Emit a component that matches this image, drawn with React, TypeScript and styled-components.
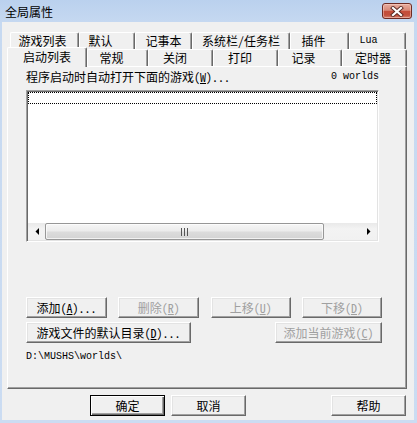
import React from "react";
import styled, { createGlobalStyle, css } from "styled-components";

const Global = createGlobalStyle`
  html, body { margin: 0; padding: 0; background: #c4d7ef; }
  body {
    width: 417px; height: 423px; overflow: hidden;
    font-family: "Noto Sans Mono CJK SC", "Noto Sans CJK SC", sans-serif;
    font-size: 12px; color: #000;
  }
`;

const Window = styled.div`
  width: 417px; height: 423px; box-sizing: border-box;
  display: flex; flex-direction: column;
  padding: 0 3px 3px 2px;
  background: linear-gradient(#bad1ee, #c6d9f1 24px, #cbdcf2);
`;

const TitleBar = styled.div`
  height: 22px; display: flex; align-items: center; justify-content: space-between;
  padding: 0 2px 0 3px;
`;

const Title = styled.span`
  font-family: "Noto Sans CJK SC", sans-serif; font-size: 12px; line-height: 14px;
  margin-top: 2px;
`;

const CloseButton = styled.div`
  width: 30px; height: 16px; box-sizing: border-box;
  border: 1px solid #6e2b24; border-radius: 3px;
  background: linear-gradient(#e8ad9f, #d88a79 45%, #c54d3a 52%, #c2503d 80%, #d88471);
  box-shadow: inset 0 0 0 1px rgba(255, 220, 210, 0.45);
  display: flex; align-items: center; justify-content: center;
`;

const Client = styled.div`
  flex: 1; background: #f0f0f0;
  display: flex; flex-direction: column;
  padding: 10px 7px 0 5px;
`;

const TabRow = styled.div<{ $offset?: number }>`
  display: flex; height: 17px; align-items: flex-end;
  margin-left: ${(p) => p.$offset ?? 0}px;
`;

const Tab = styled.div<{ $w: number; $active?: boolean; $pr?: number }>`
  width: ${(p) => p.$w}px; height: ${(p) => (p.$active ? 20 : 17)}px;
  box-sizing: border-box; flex: none;
  border-top: 1px solid #fff; border-left: 1px solid #fff; border-right: 1px solid #696969;
  border-radius: 2px 2px 0 0;
  box-shadow: inset -1px 0 #a0a0a0;
  background: #f0f0f0;
  display: flex; align-items: center; justify-content: center;
  position: relative;
  z-index: ${(p) => (p.$active ? 3 : 1)};
  margin-bottom: ${(p) => (p.$active ? -1 : 0)}px;
  padding-bottom: ${(p) => (p.$active ? 1 : 0)}px;
  padding-right: ${(p) => p.$pr ?? 0}px;
  line-height: 14px; white-space: nowrap;
`;

const Page = styled.div`
  height: 323px; box-sizing: border-box;
  border: 1px solid; border-color: #fff #696969 #696969 #fff;
  box-shadow: inset -1px -1px #a0a0a0;
  padding: 1px 24px 0 18px;
  display: flex; flex-direction: column;
  position: relative; z-index: 2;
`;

const LabelRow = styled.div`
  height: 16px; display: flex; align-items: center; justify-content: space-between;
  padding-right: 3px; white-space: nowrap;
`;

const Ascii = styled.span`
  font-family: "Liberation Mono", monospace; font-size: 10px;
`;

const ListBox = styled.div`
  margin-top: 6px; width: 353px; height: 152px; box-sizing: border-box;
  background: #fff;
  border: 1px solid; border-color: #a0a0a0 #fff #fff #a0a0a0;
  box-shadow: inset 1px 1px #696969, inset -1px -1px #e3e3e3;
  padding: 1px;
  display: flex; flex-direction: column;
`;

const FocusItem = styled.div`
  height: 12px; box-sizing: border-box;
  border: 1px dotted #000;
`;

const ListFill = styled.div`
  flex: 1;
`;

const HScroll = styled.div`
  height: 17px; display: flex;
  background: linear-gradient(#e9e9e9, #f3f3f3 35%, #f1f1f1);
`;

const ScrollArrow = styled.div`
  width: 17px; flex: none; display: flex; align-items: center; justify-content: center;
`;

const Thumb = styled.div<{ $w: number }>`
  width: ${(p) => p.$w}px; flex: none; box-sizing: border-box;
  border: 1px solid #979797; border-radius: 2px;
  background: linear-gradient(#f6f6f6, #ececec 45%, #dcdcdc 55%, #d3d3d3);
  box-shadow: inset 0 0 0 1px rgba(255, 255, 255, 0.7);
  display: flex; align-items: center; justify-content: center;
`;

const Track = styled.div`
  flex: 1;
`;

const ButtonRow = styled.div<{ $top: number }>`
  display: flex; justify-content: space-between; margin-top: ${(p) => p.$top}px;
`;

const Button = styled.button<{ $w: number; $default?: boolean }>`
  width: ${(p) => p.$w}px; height: 21px; box-sizing: border-box; flex: none;
  margin: 0; padding: 0;
  font: inherit; line-height: 14px; white-space: nowrap;
  background: #f0f0f0; color: #000;
  border: 1px solid; border-color: #fff #696969 #696969 #fff;
  box-shadow: inset -1px -1px #a0a0a0, inset 1px 1px #e3e3e3;
  &:disabled { color: #a0a0a0; }
  ${(p) =>
    p.$default &&
    css`
      border-color: #000;
      box-shadow: inset 1px 1px #fff, inset -1px -1px #696969, inset -2px -2px #a0a0a0;
    `}
`;

const PathText = styled.div`
  margin-top: 4px; height: 14px; line-height: 14px;
`;

const DialogButtons = styled.div`
  display: flex; gap: 6px; margin-top: 6px; padding: 0 1px 0 83px;
`;

const Spacer = styled.div`
  flex: 1;
`;

const backTabs: [string, number, number][] = [
  ["游戏列表", 69, 4],
  ["默认", 56, 13],
  ["记事本", 57, 0],
  ["系统栏/任务栏", 98, 0],
  ["插件", 59, 12],
];

const frontTabs: [string, number, number][] = [
  ["常规", 61, 12],
  ["关闭", 65, 11],
  ["打印", 65, 11],
  ["记录", 64, 13],
  ["定时器", 65, 3],
];

export default function App() {
  return (
    <>
      <Global />
      <Window>
        <TitleBar>
          <Title>全局属性</Title>
          <CloseButton>
            <svg width="14" height="11" viewBox="0 0 14 11">
              <path d="M3 2 L11 9 M11 2 L3 9" stroke="#5a2a24" strokeWidth="4" strokeLinecap="square" />
              <path d="M3 2 L11 9 M11 2 L3 9" stroke="#fff" strokeWidth="2.2" strokeLinecap="square" />
            </svg>
          </CloseButton>
        </TitleBar>
        <Client>
          <TabRow $offset={3}>
            {backTabs.map(([t, w, pr]) => (
              <Tab key={t} $w={w} $pr={pr}>{t}</Tab>
            ))}
            <Tab $w={57} $pr={18}><Ascii>Lua</Ascii></Tab>
          </TabRow>
          <TabRow>
            <Tab $w={80} $active>启动列表</Tab>
            {frontTabs.map(([t, w, pr]) => (
              <Tab key={t} $w={w} $pr={pr}>{t}</Tab>
            ))}
          </TabRow>
          <Page>
            <LabelRow>
              <span>程序启动时自动打开下面的游戏(<u>W</u>)...</span>
              <Ascii>0 worlds</Ascii>
            </LabelRow>
            <ListBox>
              <FocusItem />
              <ListFill />
              <HScroll>
                <ScrollArrow>
                  <svg width="4" height="7" viewBox="0 0 4 7">
                    <polygon points="4,0 4,7 0.5,3.5" fill="#000" />
                  </svg>
                </ScrollArrow>
                <Thumb $w={279}>
                  <svg width="7" height="8" viewBox="0 0 7 8">
                    <rect x="0" y="0" width="1" height="8" fill="#555" />
                    <rect x="3" y="0" width="1" height="8" fill="#555" />
                    <rect x="6" y="0" width="1" height="8" fill="#555" />
                  </svg>
                </Thumb>
                <Track />
                <ScrollArrow>
                  <svg width="4" height="7" viewBox="0 0 4 7">
                    <polygon points="0,0 0,7 3.5,3.5" fill="#000" />
                  </svg>
                </ScrollArrow>
              </HScroll>
            </ListBox>
            <ButtonRow $top={55}>
              <Button $w={81}>添加(<u>A</u>)...</Button>
              <Button $w={81} disabled>删除(<u>R</u>)</Button>
              <Button $w={80} disabled>上移(<u>U</u>)</Button>
              <Button $w={80} disabled>下移(<u>D</u>)</Button>
            </ButtonRow>
            <ButtonRow $top={4}>
              <Button $w={165}>游戏文件的默认目录(<u>D</u>)...</Button>
              <Button $w={107} disabled>添加当前游戏(<u>C</u>)</Button>
            </ButtonRow>
            <PathText>
              <Ascii>D:\MUSHS\worlds\</Ascii>
            </PathText>
          </Page>
          <DialogButtons>
            <Button $w={75} $default>确定</Button>
            <Button $w={75}>取消</Button>
            <Spacer />
            <Button $w={75}>帮助</Button>
          </DialogButtons>
        </Client>
      </Window>
    </>
  );
}
